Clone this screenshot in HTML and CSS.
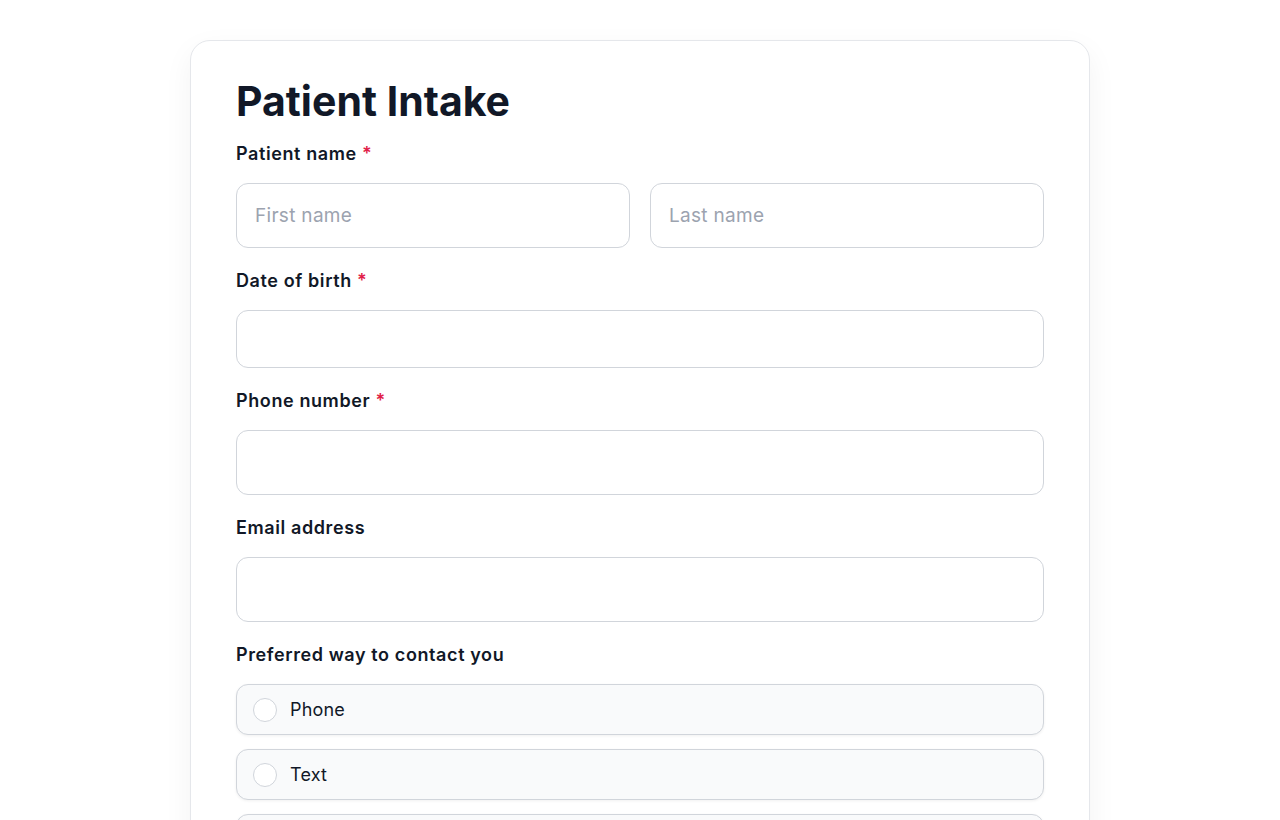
FILE: index.html
```html
<!DOCTYPE html>
<html lang="en">
<head>
    <meta charset="UTF-8">
    <meta name="viewport" content="width=device-width, initial-scale=1.0">
    <title>Patient Intake</title>
    <link rel="stylesheet" href="styles.css">
</head>
<body>

    <form class="card">
        <h1>Patient Intake</h1>

        <div class="field">
            <label>Patient name <span class="req">*</span></label>
            <div class="row">
                <input type="text" placeholder="First name">
                <input type="text" placeholder="Last name">
            </div>
        </div>

        <div class="field">
            <label for="dob">Date of birth <span class="req">*</span></label>
            <input type="text" id="dob" class="short">
        </div>

        <div class="field">
            <label for="phone">Phone number <span class="req">*</span></label>
            <input type="tel" id="phone">
        </div>

        <div class="field">
            <label for="email">Email address</label>
            <input type="email" id="email">
        </div>

        <div class="field">
            <label>Preferred way to contact you</label>
            <div class="options">
                <label class="option"><input type="radio" name="contact"> Phone</label>
                <label class="option"><input type="radio" name="contact"> Text</label>
                <label class="option"><input type="radio" name="contact"> Email</label>
            </div>
        </div>

        <button type="submit">Submit</button>
    </form>

</body>
</html>
```

FILE: styles.css
```css
body {
    margin: 0;
    padding: 40px 0;
    background-color: #ffffff;
    font-family: Inter, "Noto Sans", sans-serif;
    color: #111827;
}
.card {
    width: 900px;
    box-sizing: border-box;
    margin: 0 auto;
    padding: 36px 45px 45px;
    background-color: #ffffff;
    border: 1px solid #e5e7eb;
    border-radius: 20px;
    box-shadow: 0 10px 30px rgba(0, 0, 0, 0.05);
}
h1 {
    margin: 0 0 17px;
    font-size: 41px;
    line-height: 48px;
    font-weight: 700;
    color: #111827;
}
.field {
    margin-bottom: 21px;
}
.field > label {
    display: block;
    margin-bottom: 17px;
    font-size: 18px;
    line-height: 24px;
    font-weight: 600;
    letter-spacing: 0.6px;
    color: #111827;
}
.req {
    color: #e11d48;
}
.row {
    display: flex;
    gap: 20px;
}
input[type="text"],
input[type="tel"],
input[type="email"] {
    display: block;
    width: 100%;
    height: 65px;
    box-sizing: border-box;
    padding: 0 18px;
    font-family: inherit;
    font-size: 19px;
    letter-spacing: 0.3px;
    color: #111827;
    border: 1px solid #d1d5db;
    border-radius: 12px;
    background-color: #ffffff;
}
input.short {
    height: 58px;
}
input::placeholder {
    color: #9ca3af;
}
.options {
    display: flex;
    flex-direction: column;
    gap: 14px;
}
.option {
    display: flex;
    align-items: center;
    gap: 13px;
    height: 51px;
    box-sizing: border-box;
    padding: 0 16px;
    font-size: 18px;
    letter-spacing: 0.2px;
    color: #111827;
    background-color: #f9fafb;
    border: 1px solid #d1d5db;
    border-radius: 12px;
    box-shadow: 0 1px 3px rgba(0, 0, 0, 0.06);
}
.option input {
    appearance: none;
    margin: 0;
    width: 24px;
    height: 24px;
    border: 1px solid #d1d5db;
    border-radius: 50%;
    background-color: #ffffff;
}
button {
    margin-top: 10px;
    width: 100%;
    height: 56px;
    font-family: inherit;
    font-size: 18px;
    font-weight: 600;
    color: white;
    background-color: #111827;
    border: none;
    border-radius: 12px;
}
```
